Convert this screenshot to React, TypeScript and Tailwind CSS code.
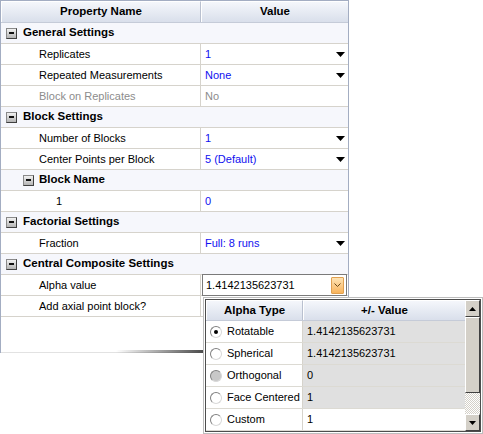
import React from "react";

const F = "font-['Liberation_Sans',Arial,sans-serif]";

const Arrow = () => (
  <svg width="9" height="5" viewBox="0 0 9 5" className="shrink-0">
    <path d="M0 0h9L4.5 5z" fill="#000" />
  </svg>
);

const Minus = () => (
  <div className="w-[11px] h-[11px] border border-t-[#8a8a8a] border-l-[#8a8a8a] border-r-[#404040] border-b-[#404040] bg-gradient-to-b from-[#f2f2f2] to-[#b4b4b4] flex items-center justify-center shrink-0">
    <div className="w-[5px] h-[2px] bg-[#111]" />
  </div>
);

type Row =
  | { kind: "cat"; label: string }
  | { kind: "sub"; label: string }
  | {
      kind: "item";
      label: string;
      value?: string;
      arrow?: boolean;
      gray?: boolean;
      indent?: boolean;
      editor?: boolean;
    };

const rows: Row[] = [
  { kind: "cat", label: "General Settings" },
  { kind: "item", label: "Replicates", value: "1", arrow: true },
  { kind: "item", label: "Repeated Measurements", value: "None", arrow: true },
  { kind: "item", label: "Block on Replicates", value: "No", gray: true },
  { kind: "cat", label: "Block Settings" },
  { kind: "item", label: "Number of Blocks", value: "1", arrow: true },
  { kind: "item", label: "Center Points per Block", value: "5 (Default)", arrow: true },
  { kind: "sub", label: "Block Name" },
  { kind: "item", label: "1", value: "0", indent: true },
  { kind: "cat", label: "Factorial Settings" },
  { kind: "item", label: "Fraction", value: "Full: 8 runs", arrow: true },
  { kind: "cat", label: "Central Composite Settings" },
  { kind: "item", label: "Alpha value", value: "1.4142135623731", editor: true },
  { kind: "item", label: "Add axial point block?" },
];

const Radio = ({ checked, disabled }: { checked?: boolean; disabled?: boolean }) => (
  <div
    className={`w-[12px] h-[12px] rounded-full border border-t-[#808080] border-l-[#808080] border-r-[#d8d8d8] border-b-[#d8d8d8] flex items-center justify-center shrink-0 ${
      disabled ? "bg-[#c8c8c8]" : "bg-white"
    }`}
  >
    {checked && <div className="w-[4px] h-[4px] rounded-full bg-black" />}
  </div>
);

const popupRows = [
  { label: "Rotatable", value: "1.4142135623731", checked: true, shade: true },
  { label: "Spherical", value: "1.4142135623731", shade: true },
  { label: "Orthogonal", value: "0", disabled: true, shade: true },
  { label: "Face Centered", value: "1", shade: true },
  { label: "Custom", value: "1", shade: false },
];

export default function App() {
  return (
    <div className={`relative w-[483px] h-[434px] bg-white text-[11px] text-black ${F}`}>
      {/* Main property grid */}
      <div className="relative w-[349px] h-[353px] border-l border-r border-t border-[#a3adc2] flex flex-col">
        {/* Header */}
        <div className="flex h-[22px] border-b border-[#c5cbd8] bg-gradient-to-b from-[#f6f8fc] to-[#d9dfeb] font-bold text-[11.5px]">
          <div className="w-[200px] border-r border-[#b9c0cf] border-t border-l border-t-white border-l-white flex items-center justify-center">
            Property Name
          </div>
          <div className="flex-1 border-t border-l border-white flex items-center justify-center">Value</div>
        </div>
        {rows.map((r, i) => {
          if (r.kind === "cat") {
            return (
              <div key={i} className="flex h-[21px] items-center border-b border-[#d6d3cc] bg-[#f6f7fc] pl-[5px] gap-[6px] font-bold text-[11.5px]">
                <Minus />
                <span className="whitespace-nowrap">{r.label}</span>
              </div>
            );
          }
          if (r.kind === "sub") {
            return (
              <div key={i} className="flex h-[21px] items-center border-b border-[#d6d3cc] bg-[#f6f7fc] pl-[22px] gap-[5px] font-bold text-[11.5px]">
                <Minus />
                <span className="whitespace-nowrap">{r.label}</span>
              </div>
            );
          }
          return (
            <div key={i} className="flex h-[21px] border-b border-[#d6d3cc]">
              <div
                className={`w-[200px] border-r border-[#d6d3cc] flex items-center whitespace-nowrap ${
                  r.indent ? "pl-[55px]" : "pl-[38px]"
                } ${r.gray ? "text-[#8c8c8c]" : ""}`}
              >
                {r.label}
              </div>
              <div className="flex-1 relative flex items-center">
                {r.editor ? (
                  <div className="absolute left-[1px] right-[1px] top-[-1px] h-[22px] bg-white border border-[#7a7a7a] flex items-center pl-[3px] pr-[2px] z-10">
                    <span className="flex-1">{r.value}</span>
                    <div className="w-[13px] h-[17px] border border-[#e0a050] rounded-[1px] bg-gradient-to-b from-[#fde3b4] to-[#f7b35a] flex items-center justify-center">
                      <svg width="7" height="4" viewBox="0 0 7 4">
                        <path d="M0.5 0.5L3.5 3.5L6.5 0.5" stroke="#6b4a1a" strokeWidth="1" fill="none" />
                      </svg>
                    </div>
                  </div>
                ) : (
                  <div className="flex-1 flex items-center pl-[4px] pr-[3px]">
                    <span className={`flex-1 ${r.gray ? "text-[#8c8c8c]" : "text-[#1010f0]"}`}>{r.value}</span>
                    {r.arrow && <Arrow />}
                  </div>
                )}
              </div>
            </div>
          );
        })}
        <div className="flex-1" />
        <div className="h-[1px] bg-[#e2e2e2]" />
        <div className="absolute left-[115px] bottom-[0px] w-[88px] h-[3px] bg-gradient-to-r from-[#ffffff00] to-[#4a4a4a]" />
      </div>

      {/* Dropdown popup */}
      <div className="absolute left-[203px] top-[297px] w-[280px] h-[137px] border border-[#bdbdbd] bg-white p-[1px]">
        <div className="w-full h-full border border-[#4d4d4d] flex">
          <div className="flex-1 flex flex-col">
            <div className="flex h-[21px] border-b border-[#c5cbd8] bg-gradient-to-b from-[#f6f8fc] to-[#d9dfeb] font-bold text-[11.5px]">
              <div className="w-[97px] border-r border-[#b9c0cf] border-t border-l border-t-white border-l-white flex items-center justify-center">
                Alpha Type
              </div>
              <div className="flex-1 border-t border-l border-white flex items-center justify-center">+/- Value</div>
            </div>
            {popupRows.map((p, i) => (
              <div key={i} className="flex h-[22px] border-b border-[#dcdad3]">
                <div className="w-[97px] border-r border-[#d6d3cc] flex items-center pl-[4px] gap-[5px] bg-white whitespace-nowrap">
                  <Radio checked={p.checked} disabled={p.disabled} />
                  <span>{p.label}</span>
                </div>
                <div className={`flex-1 flex items-center pl-[4px] ${p.shade ? "bg-[#e0e0e0]" : "bg-white"}`}>
                  {p.value}
                </div>
              </div>
            ))}
          </div>
          {/* Scrollbar */}
          <div className="w-[15px] flex flex-col bg-[#d4d0c8]">
            <div className="h-[17px] border border-t-white border-l-white border-r-[#404040] border-b-[#404040] bg-[#d4d0c8] flex items-center justify-center">
              <svg width="7" height="4" viewBox="0 0 7 4">
                <path d="M0 4h7L3.5 0z" fill="#000" />
              </svg>
            </div>
            <div className="h-[76px] border border-t-white border-l-white border-r-[#404040] border-b-[#404040] bg-[#d4d0c8]" />
            <div className="flex-1 bg-[repeating-conic-gradient(#ffffff_0_25%,#d4d0c8_0_50%)] bg-[length:2px_2px]" />
            <div className="h-[17px] border border-t-white border-l-white border-r-[#404040] border-b-[#404040] bg-[#d4d0c8] flex items-center justify-center">
              <svg width="7" height="4" viewBox="0 0 7 4">
                <path d="M0 0h7L3.5 4z" fill="#000" />
              </svg>
            </div>
          </div>
        </div>
      </div>
    </div>
  );
}
